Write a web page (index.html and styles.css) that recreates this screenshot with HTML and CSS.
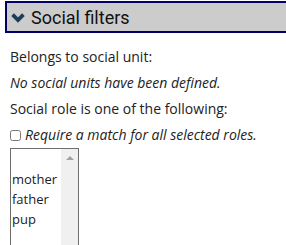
FILE: index.html
```html
<!DOCTYPE html>
<html lang="en">
  <head>
    <meta charset="UTF-8" />
    <title>Social filters</title>
    <link rel="stylesheet" href="styles.css">
  </head>
  <body>
    <section class="filter-section">
      <h3 class="filter-header">
        <svg class="chevron" width="14" height="10" viewBox="0 0 14 10">
          <path d="M1.6 1.6 L7 7 L12.4 1.6" fill="none" stroke="#1c3d5a" stroke-width="3.8" />
        </svg>
        Social filters
      </h3>
      <div class="filter-body">
        <p>Belongs to social unit:</p>
        <p class="note">No social units have been defined.</p>
        <p>Social role is one of the following:</p>
        <label class="match-all">
          <input type="checkbox" />
          <span>Require a match for all selected roles.</span>
        </label>
        <div class="role-list">
          <ul class="role-options">
            <li></li>
            <li>mother</li>
            <li>father</li>
            <li>pup</li>
          </ul>
          <div class="scroll-track">
            <span class="scroll-up"></span>
          </div>
        </div>
      </div>
    </section>
  </body>
</html>
```

FILE: styles.css
```css
* {
  box-sizing: border-box;
  font-family: "Open Sans", sans-serif;
}
body {
  margin: 0;
  padding-top: 1px;
  background-color: #ffffff;
  color: #222222;
  font-size: 14px;
  overflow: hidden;
}
.filter-header {
  display: flex;
  align-items: center;
  gap: 6px;
  margin: 0 0 0 5px;
  width: 300px;
  height: 32px;
  padding-left: 4px;
  background-color: #cccccc;
  border: 2px solid #000066;
  border-right: none;
  font-family: "Roboto", sans-serif;
  font-size: 18px;
  font-weight: normal;
  color: #111111;
}
.chevron {
  margin-top: 1px;
}
.filter-body {
  padding: 15px 10px 0;
}
.filter-body p {
  margin: 0 0 8px;
  line-height: 18px;
}
.filter-body .note {
  font-style: italic;
}
.match-all {
  display: flex;
  align-items: center;
  gap: 4px;
  line-height: 18px;
}
.match-all input {
  margin: 0;
  width: 11px;
  height: 11px;
}
.match-all span {
  font-style: italic;
}
.role-list {
  display: flex;
  margin-top: 4px;
  width: 69px;
  height: 120px;
  border: 1px solid #6e6e6e;
}
.role-options {
  flex: 1;
  margin: 0;
  padding: 0;
  list-style: none;
  font-size: 13px;
  color: #222222;
}
.role-options li {
  padding: 0 1px;
  height: 20px;
  line-height: 20px;
}
.scroll-track {
  display: flex;
  justify-content: center;
  width: 17px;
  padding-top: 7px;
  background-color: #f0f0f0;
}
.scroll-up {
  width: 0;
  height: 0;
  border-left: 4px solid transparent;
  border-right: 4px solid transparent;
  border-bottom: 4px solid #a3a3a3;
}
```
